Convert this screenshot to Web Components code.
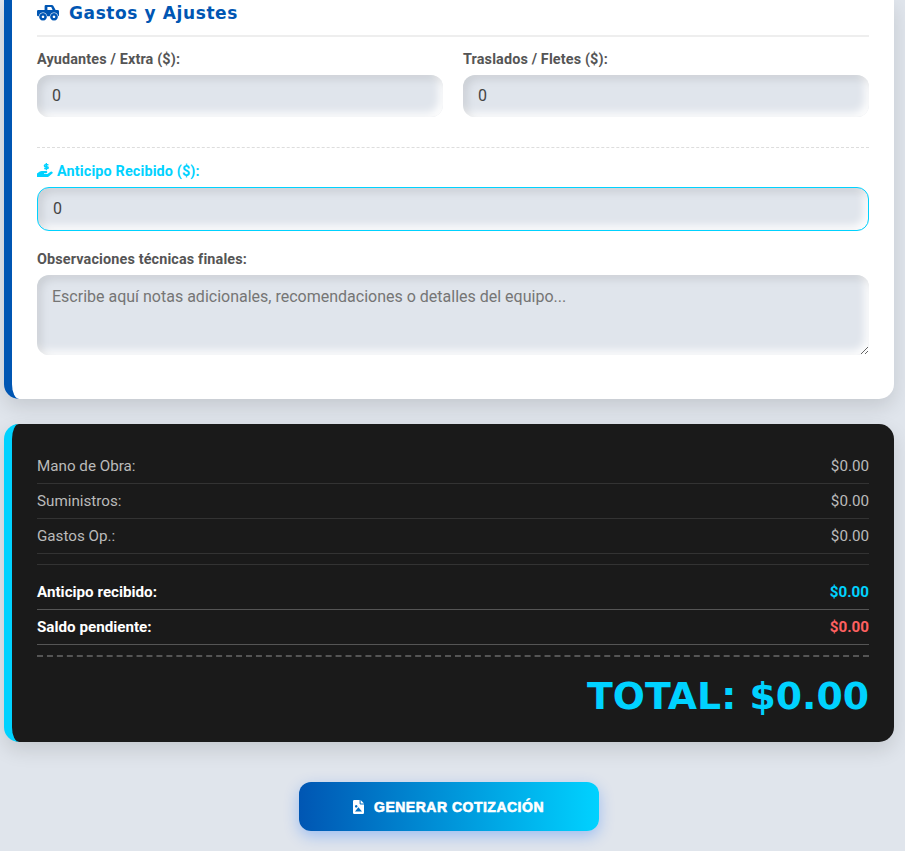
<!DOCTYPE html>
<html lang="es">
<head>
<meta charset="utf-8">
<title>Cotización</title>
<style>
  html, body { margin: 0; height: 851px; overflow: hidden; }
  body {
    background: #e0e5ec;
    font-family: Roboto, "Liberation Sans", sans-serif;
  }
  main {
    display: flex;
    flex-direction: column;
    gap: 25px;
    padding: 0 11px 0 4px;
  }
</style>
</head>
<body>
<main>
  <expense-card>
    <section-title slot="title">Gastos y Ajustes</section-title>
    <div-grid slot="fields">
      <form-field label="Ayudantes / Extra ($):" value="0"></form-field>
      <form-field label="Traslados / Fletes ($):" value="0"></form-field>
    </div-grid>
    <advance-field slot="advance" label="Anticipo Recibido ($):" value="0"></advance-field>
    <notes-field slot="notes" label="Observaciones técnicas finales:" placeholder="Escribe aquí notas adicionales, recomendaciones o detalles del equipo..."></notes-field>
  </expense-card>
  <summary-card total="$0.00">
    <summary-row label="Mano de Obra:" amount="$0.00"></summary-row>
    <summary-row label="Suministros:" amount="$0.00"></summary-row>
    <summary-row label="Gastos Op.:" amount="$0.00"></summary-row>
    <summary-row slot="balance" strong label="Anticipo recibido:" amount="$0.00" tone="#00d2ff"></summary-row>
    <summary-row slot="balance" strong label="Saldo pendiente:" amount="$0.00" tone="#ff6060"></summary-row>
  </summary-card>
  <generate-button>GENERAR COTIZACIÓN</generate-button>
</main>

<script>
const insetInput = `
  background: #e0e5ec;
  box-shadow: inset 4px 4px 8px rgba(0, 0, 0, 0.1), inset -4px -4px 8px #fff;
  border: 0;
  border-radius: 12px;
  box-sizing: border-box;
  width: 100%;
  padding: 0 15px 2px;
  outline: none;
  font: 16px Roboto, sans-serif;
  color: #444;
  display: block;
`;
const labelStyle = `
  display: flex;
  align-items: center;
  height: 16px;
  margin-bottom: 8px;
  font: 700 14.4px Roboto, sans-serif;
  letter-spacing: .14px;
  color: #555;
`;

class ExpenseCard extends HTMLElement {
  connectedCallback() {
    this.attachShadow({ mode: 'open' });
    this.shadowRoot.innerHTML = `
      <style>
        :host {
          display: block;
          height: 399px;
          box-sizing: border-box;
          background: #fff;
          border-left: 8px solid #0056b3;
          border-radius: 0 0 15px 15px;
          padding: 0 25px;
          box-shadow: 0 8px 20px rgba(0, 0, 0, 0.12);
        }
        .rule { border-top: 1px dashed #ddd; margin: 30px 0 15px; }
        .gap { height: 20px; }
      </style>
      <slot name="title"></slot>
      <slot name="fields"></slot>
      <div class="rule"></div>
      <slot name="advance"></slot>
      <div class="gap"></div>
      <slot name="notes"></slot>
    `;
  }
}

class SectionTitle extends HTMLElement {
  connectedCallback() {
    this.attachShadow({ mode: 'open' });
    this.shadowRoot.innerHTML = `
      <style>
        :host {
          display: flex;
          align-items: center;
          gap: 10px;
          height: 35px;
          margin-bottom: 14px;
          border-bottom: 2px solid #eee;
          color: #0056b3;
          font: 700 17px "DejaVu Sans", sans-serif;
          letter-spacing: .6px;
        }
        svg { width: 22px; height: 17px; margin-bottom: 11px; flex: none; }
        span { margin-bottom: 10px; }
      </style>
      <svg viewBox="0 0 22 17" fill="currentColor">
        <path fill-rule="evenodd" d="M7.6 2.2 Q7.6 1 8.8 1 H14.8 Q15.8 1 16.3 1.8 L18.6 6 H20.8 Q22 6 22 7.2 V11 Q22 12.2 20.8 12.2 H1.2 Q0 12.2 0 11 V7.2 Q0 6 1.2 6 H7.6 Z M10.4 3 V6 H15.6 L14.2 3 Z"/>
        <circle cx="6" cy="12.8" r="4.3" fill="#fff"/>
        <circle cx="17" cy="12.8" r="4.3" fill="#fff"/>
        <path fill-rule="evenodd" d="M6 9 a3.8 3.8 0 1 0 .01 0 Z M6 11.5 a1.3 1.3 0 1 1 -.01 0 Z M17 9 a3.8 3.8 0 1 0 .01 0 Z M17 11.5 a1.3 1.3 0 1 1 -.01 0 Z"/>
      </svg>
      <span><slot></slot></span>
    `;
  }
}

class DivGrid extends HTMLElement {
  connectedCallback() {
    this.attachShadow({ mode: 'open' });
    this.shadowRoot.innerHTML = `
      <style>
        :host { display: grid; grid-template-columns: 1fr 1fr; gap: 20px; }
      </style>
      <slot></slot>
    `;
  }
}

class FormField extends HTMLElement {
  connectedCallback() {
    this.attachShadow({ mode: 'open' });
    this.shadowRoot.innerHTML = `
      <style>
        :host { display: block; }
        label { ${labelStyle} }
        input { ${insetInput} height: 42px; }
      </style>
      <label>${this.getAttribute('label')}</label>
      <input type="number" value="${this.getAttribute('value')}">
    `;
  }
}

class AdvanceField extends HTMLElement {
  connectedCallback() {
    this.attachShadow({ mode: 'open' });
    this.shadowRoot.innerHTML = `
      <style>
        :host { display: block; }
        label { ${labelStyle} color: #00d2ff; gap: 4px; }
        svg { width: 16px; height: 15px; flex: none; margin-bottom: 1px; }
        input { ${insetInput} height: 44px; border: 1px solid #00d2ff; }
      </style>
      <label>
        <svg viewBox="0 0 16 15" fill="currentColor">
          <path fill="none" stroke="currentColor" stroke-width="1.5" d="M11.4 1.8 H8.6 Q7.4 1.8 7.4 2.8 Q7.4 3.7 8.6 3.7 H10 Q11.2 3.7 11.2 4.7 Q11.2 5.6 10 5.6 H7.2"/>
          <path d="M8.7 0 H10 V7.2 H8.7 Z"/>
          <path d="M0 10.6 L2.8 8.6 Q3.6 8 4.7 8 H9.2 Q10.3 8 10.3 9.1 Q10.3 10.2 9.2 10.2 H7 V11 H10.4 L13.6 8.7 Q14.6 8.1 15.4 8.9 Q16.2 9.8 15.2 10.6 L11.8 13.4 Q11 14 10 14 H0 Z"/>
        </svg>
        ${this.getAttribute('label')}
      </label>
      <input type="number" value="${this.getAttribute('value')}">
    `;
  }
}

class NotesField extends HTMLElement {
  connectedCallback() {
    this.attachShadow({ mode: 'open' });
    this.shadowRoot.innerHTML = `
      <style>
        :host { display: block; }
        label { ${labelStyle} }
        textarea { ${insetInput} height: 80px; padding: 12px 15px; }
        textarea::placeholder { color: #757575; }
      </style>
      <label>${this.getAttribute('label')}</label>
      <textarea placeholder="${this.getAttribute('placeholder')}"></textarea>
    `;
  }
}

class SummaryCard extends HTMLElement {
  connectedCallback() {
    this.attachShadow({ mode: 'open' });
    this.shadowRoot.innerHTML = `
      <style>
        :host {
          display: block;
          box-sizing: border-box;
          height: 318px;
          background: #1a1a1a;
          border-left: 8px solid #00d2ff;
          border-radius: 15px;
          padding: 25px;
          box-shadow: 0 8px 20px rgba(0, 0, 0, 0.12);
        }
        .sep { border-top: 1px solid #333; margin: 10px 0; }
        .total {
          border-top: 2px dashed #555;
          margin-top: 10px;
          padding-top: 17px;
          text-align: right;
          color: #00d2ff;
          font: 700 37.8px/44px "DejaVu Sans", sans-serif;
        }
      </style>
      <slot></slot>
      <div class="sep"></div>
      <slot name="balance"></slot>
      <div class="total">TOTAL: ${this.getAttribute('total')}</div>
    `;
  }
}

class SummaryRow extends HTMLElement {
  connectedCallback() {
    const strong = this.hasAttribute('strong');
    const tone = this.getAttribute('tone');
    this.attachShadow({ mode: 'open' });
    this.shadowRoot.innerHTML = `
      <style>
        :host {
          display: flex;
          justify-content: space-between;
          align-items: center;
          box-sizing: border-box;
          height: 35px;
          border-bottom: 1px solid ${strong ? '#555' : '#333'};
          font: ${strong ? 700 : 400} 15.2px Roboto, sans-serif;
          color: ${strong ? '#fff' : '#bbb'};
        }
        .amount { color: ${tone || 'inherit'}; }
      </style>
      <span>${this.getAttribute('label')}</span>
      <span class="amount">${this.getAttribute('amount')}</span>
    `;
  }
}

class GenerateButton extends HTMLElement {
  connectedCallback() {
    this.attachShadow({ mode: 'open' });
    this.shadowRoot.innerHTML = `
      <style>
        :host { display: flex; justify-content: center; margin-top: 15px; }
        button {
          display: flex;
          align-items: center;
          justify-content: center;
          gap: 10px;
          width: 300px;
          height: 49px;
          padding: 0 1px 0 0;
          border: 0;
          border-radius: 12px;
          color: #fff;
          background: linear-gradient(90deg, #0056b3, #00d2ff);
          box-shadow: 0 5px 15px rgba(0, 100, 255, 0.3);
          font: 900 14px "Liberation Sans", sans-serif;
          -webkit-text-stroke: .6px #fff;
          letter-spacing: .5px;
          cursor: pointer;
        }
        svg { width: 11px; height: 14px; flex: none; }
      </style>
      <button>
        <svg viewBox="0 0 11 14" fill="currentColor">
          <path fill-rule="evenodd" d="M1.2 0 H6.6 V3.6 Q6.6 4.4 7.4 4.4 H11 V12.8 Q11 14 9.8 14 H1.2 Q0 14 0 12.8 V1.2 Q0 0 1.2 0 Z M3.2 5 a1.3 1.3 0 1 0 .01 0 Z M2 11.6 L5.4 7.2 L9 11.6 Z"/>
          <path d="M7.6 0 L11 3.4 H7.6 Z"/>
        </svg>
        <slot></slot>
      </button>
    `;
  }
}

customElements.define('expense-card', ExpenseCard);
customElements.define('section-title', SectionTitle);
customElements.define('div-grid', DivGrid);
customElements.define('form-field', FormField);
customElements.define('advance-field', AdvanceField);
customElements.define('notes-field', NotesField);
customElements.define('summary-card', SummaryCard);
customElements.define('summary-row', SummaryRow);
customElements.define('generate-button', GenerateButton);
</script>
</body>
</html>
